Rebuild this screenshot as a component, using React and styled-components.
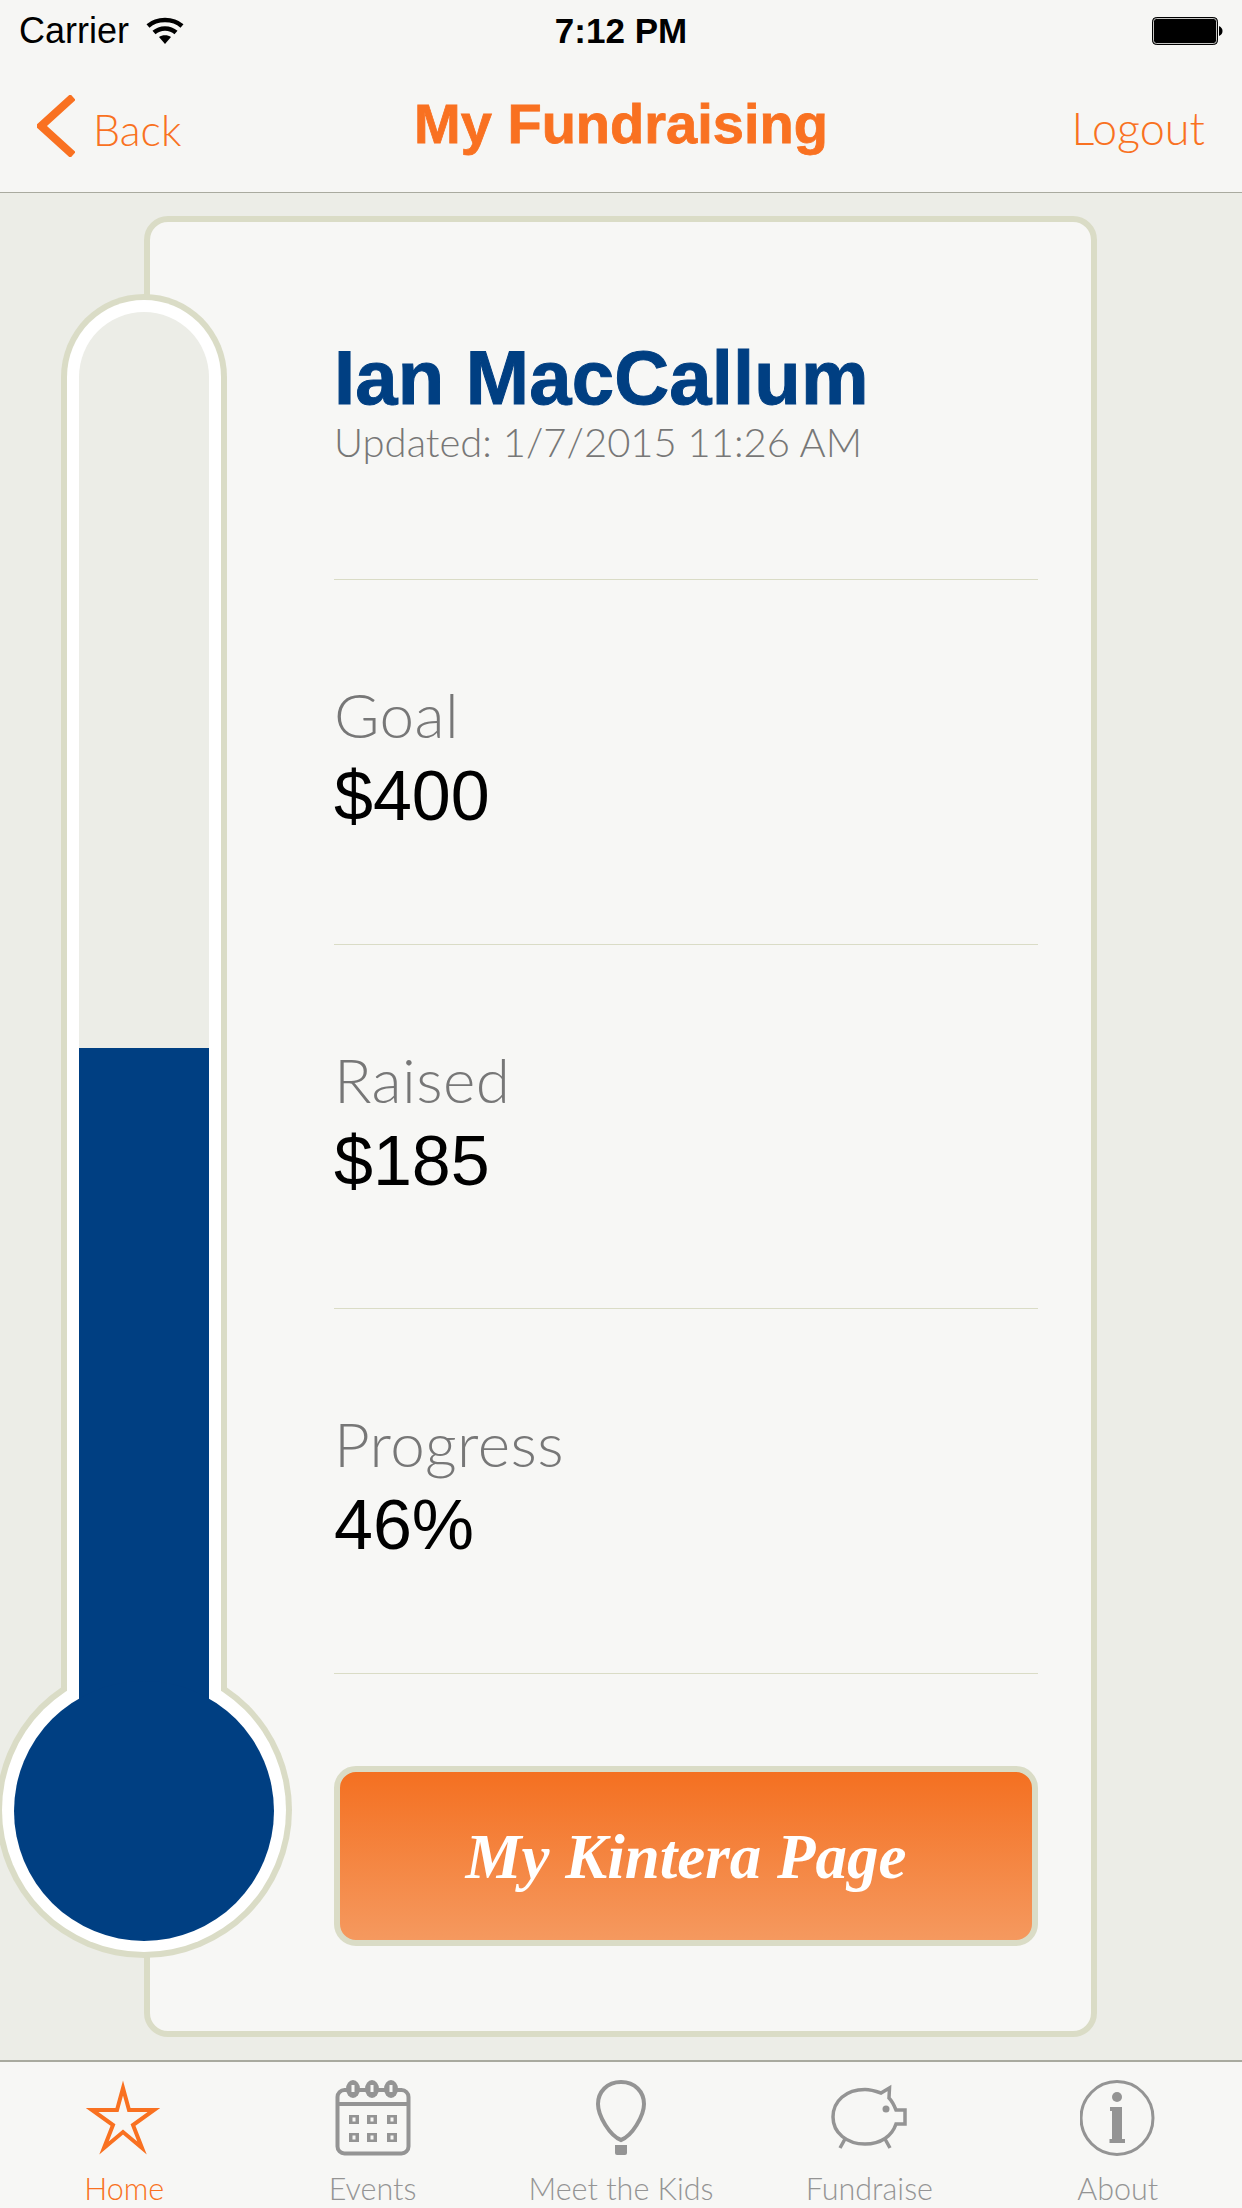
import React from "react"
import styled, { createGlobalStyle } from "styled-components"

const ORANGE = "#f97121"
const BLUE = "#003f82"
const LINE = "#dadcc6"
const TAB_GRAY = "#949494"
const HUMANIST = '"Lato", "Open Sans", sans-serif'
const GROTESK = '"Liberation Sans", Arial, sans-serif'

const GlobalStyle = createGlobalStyle`
  html, body {
    margin: 0;
    padding: 0;
    background: #ecede7;
  }
`

const Page = styled.div`
  width: 1242px;
  height: 2208px;
  display: flex;
  flex-direction: column;
  overflow: hidden;
`

const TopBar = styled.header`
  height: 192px;
  flex: none;
  background: #f6f6f4;
  border-bottom: 1px solid #a9aa9f;
  display: flex;
  flex-direction: column;
`

const StatusBar = styled.div`
  height: 62px;
  padding: 0 19px;
  display: grid;
  grid-template-columns: 1fr auto 1fr;
  align-items: center;
  font-family: ${GROTESK};
  color: #000;
`

const Carrier = styled.div`
  display: flex;
  align-items: center;
  gap: 17px;
  font-size: 36px;
`

const Clock = styled.div`
  font-size: 35px;
  font-weight: 700;
`

const BatteryWrap = styled.div`
  justify-self: end;
  display: flex;
`

const NavBar = styled.nav`
  flex: 1;
  display: grid;
  grid-template-columns: 1fr auto 1fr;
  align-items: start;
  padding: 33px 37px 0 37px;
  color: ${ORANGE};
`

const BackLink = styled.div`
  display: flex;
  align-items: center;
  gap: 18px;
  font-family: ${HUMANIST};
  font-size: 43px;
  font-weight: 300;
`

const BackText = styled.span`
  padding-top: 6px;
`

const NavTitle = styled.h1`
  margin: -2px 0 0;
  font-family: ${GROTESK};
  font-size: 56px;
  font-weight: 700;
  line-height: 62px;
  -webkit-text-stroke: 0.8px ${ORANGE};
`

const Logout = styled.div`
  justify-self: end;
  font-family: ${HUMANIST};
  font-size: 45px;
  font-weight: 300;
  line-height: 62px;
  margin-top: 2px;
`

const Main = styled.main`
  position: relative;
  flex: 1;
  min-height: 0;
  padding: 23px 145px 23px 144px;
  background: #ecede7;
`

const Card = styled.section`
  box-sizing: border-box;
  height: 100%;
  background: #f7f7f5;
  border: 6px solid ${LINE};
  border-radius: 24px;
  padding: 0 53px 0 184px;
  display: flex;
  flex-direction: column;
`

const Person = styled.div`
  height: 358px;
  flex: none;
  padding-top: 115px;
  box-sizing: border-box;
  border-bottom: 1px solid ${LINE};
`

const Name = styled.h2`
  margin: 0;
  font-family: ${GROTESK};
  font-size: 76px;
  font-weight: 700;
  letter-spacing: 0.2px;
  line-height: 82px;
  color: ${BLUE};
  -webkit-text-stroke: 1px ${BLUE};
`

const Updated = styled.div`
  font-family: ${HUMANIST};
  font-size: 40px;
  font-weight: 300;
  line-height: 47px;
  color: #777;
`

const Stat = styled.div`
  height: 364.5px;
  flex: none;
  box-sizing: border-box;
  padding-top: 104px;
  border-bottom: 1px solid ${LINE};
`

const StatLabel = styled.div`
  font-family: ${HUMANIST};
  font-size: 62px;
  font-weight: 300;
  letter-spacing: 0.4px;
  line-height: 60px;
  color: #777;
`

const StatValue = styled.div`
  margin-top: 8px;
  font-family: ${GROTESK};
  font-size: 70px;
  line-height: 88px;
  color: #000;
`

const KinteraButton = styled.button`
  margin-top: 92px;
  height: 180px;
  flex: none;
  box-sizing: border-box;
  border: 6px solid ${LINE};
  border-radius: 22px;
  background: linear-gradient(#f47021, #f5995f);
  color: #fff;
  font-family: "Liberation Serif", serif;
  font-style: italic;
  font-weight: 700;
  font-size: 63px;
  padding: 4px 0 0;
`

const Thermometer = styled.svg`
  position: absolute;
  left: -4px;
  top: 101px;
`

const TabBar = styled.footer`
  height: 148px;
  flex: none;
  box-sizing: border-box;
  background: #f7f7f5;
  border-top: 2px solid #a9aa9f;
  display: grid;
  grid-template-columns: repeat(5, 1fr);
`

const Tab = styled.div`
  display: flex;
  flex-direction: column;
  align-items: center;
  padding-top: 18px;
  color: ${({ $active }) => ($active ? ORANGE : TAB_GRAY)};
  font-family: ${HUMANIST};
  font-weight: 300;
  font-size: 30.5px;
`

const TabIcon = styled.svg`
  display: block;
  height: 76px;
  flex: none;
`

const TabLabel = styled.span`
  line-height: 36px;
  margin-top: 14px;
`

const WifiIcon = () => (
  <svg width="38" height="28" viewBox="0 0 38 28">
    <path d="M2 9 C11 1 27 1 36 9" fill="none" stroke="#000" strokeWidth="4.5" />
    <path d="M8 15.5 C14 10 24 10 30 15.5" fill="none" stroke="#000" strokeWidth="4.5" />
    <path d="M13 20 C16 17.500 22 17.500 25 20 L19 27 Z" fill="#000" />
  </svg>
)

const BatteryIcon = () => (
  <svg width="71" height="28" viewBox="0 0 71 28">
    <rect x="0.5" y="0.5" width="65" height="27" rx="4" fill="#000" stroke="#000" />
    <rect x="1.500" y="1.500" width="63" height="25" rx="3" fill="#000" stroke="#f6f6f4" strokeWidth="0.8" />
    <path d="M67 9 C69.500 10 70.500 12 70.500 14 C70.500 16 69.500 18 67 19 Z" fill="#000" />
  </svg>
)

const Chevron = () => (
  <svg width="38" height="62" viewBox="0 0 38 62">
    <path d="M36 2 L4 31 L36 60" fill="none" stroke={ORANGE} strokeWidth="8" />
  </svg>
)

const StarIcon = () => (
  <TabIcon viewBox="1 0 80 76" width="80">
    <path
      d="M40 8 L46 30 L71 30 L50 45 L59 68 L40 52 L21 68 L30 45 L9 30 L34 30 Z"
      fill="none"
      stroke={ORANGE}
      strokeWidth="4"
      strokeMiterlimit="10"
    />
  </TabIcon>
)

const CalendarIcon = () => (
  <TabIcon viewBox="0 0 76 76" width="76" fill={TAB_GRAY}>
    <rect x="2.500" y="10" width="71" height="63.500" rx="7" fill="none" stroke={TAB_GRAY} strokeWidth="4" />
    <rect x="2" y="22" width="72" height="4" />
    {[18, 37, 56].map(x => (
      <g key={x}>
        <ellipse cx={x} cy="9" rx="7" ry="9" />
        <rect x={x - 1.5} y="5" width="3" height="7" fill="#f7f7f5" />
      </g>
    ))}
    {[35, 53].map(y =>
      [19, 37, 57].map(x => (
        <g key={x + "-" + y}>
          <rect x={x - 5} y={y} width="10" height="9" />
          <rect x={x - 1.5} y={y + 2.5} width="3" height="4" fill="#f7f7f5" />
        </g>
      ))
    )}
  </TabIcon>
)

const BalloonIcon = () => (
  <TabIcon viewBox="0 0 50 76" width="50">
    <path
      d="M25 2 C11 2 2 12 2 24 C2 36 14 56 25 60 C36 56 48 36 48 24 C48 12 39 2 25 2 Z"
      fill="none"
      stroke={TAB_GRAY}
      strokeWidth="4"
    />
    <path d="M19 65 L31 65 L31 73 Q31 75 29 75 L21 75 Q19 75 19 73 Z" fill={TAB_GRAY} />
  </TabIcon>
)

const PigIcon = () => (
  <TabIcon viewBox="1 0 84 76" width="84">
    <g fill="none" stroke={TAB_GRAY} strokeWidth="3.500">
      <path d="M55 13 C48 10.500 44 9.500 39 9.500 C20 9.500 7 21 7 37 C7 53 21 64 39 64 C55 64 66 56 70 44 L79 44 L79 30 L70 30 C68 25 66 21 63 18 L63.500 8 Z" />
      <path d="M19 59 L14 68 M59 59 L64 68" />
    </g>
    <circle cx="60" cy="29" r="3.500" fill={TAB_GRAY} />
  </TabIcon>
)

const InfoIcon = () => (
  <TabIcon viewBox="1 0 76 76" width="76" fill={TAB_GRAY}>
    <ellipse cx="38" cy="38" rx="36" ry="36.500" fill="none" stroke={TAB_GRAY} strokeWidth="3" />
    <circle cx="38" cy="17" r="5" />
    <path d="M31 27 L43 27 L43 59 L46 59 L46 63 L30.500 63 L30.500 59 L33 59 L33 31 L31 31 Z" />
  </TabIcon>
)

const tabs = [
  { label: "Home", Icon: StarIcon, active: true },
  { label: "Events", Icon: CalendarIcon },
  { label: "Meet the Kids", Icon: BalloonIcon },
  { label: "Fundraise", Icon: PigIcon },
  { label: "About", Icon: InfoIcon },
]

const stats = [
  { label: "Goal", value: "$400" },
  { label: "Raised", value: "$185" },
  { label: "Progress", value: "46%" },
]

// coordinates are page pixels, the viewBox just starts at the top of the tube
const ThermometerGraphic = () => (
  <Thermometer width="300" height="1664" viewBox="-4 294 300 1664">
    <rect x="61" y="294" width="166" height="1600" rx="83" fill={LINE} />
    <circle cx="144" cy="1810" r="148" fill={LINE} />
    <rect x="67" y="300" width="154" height="1600" rx="77" fill="#fff" />
    <circle cx="144" cy="1810" r="142" fill="#fff" />
    <path d="M79 1048 L79 377 A65 65 0 0 1 209 377 L209 1048 Z" fill="#ecede7" />
    <rect x="79" y="1048" width="130" height="762" fill={BLUE} />
    <circle cx="144" cy="1811" r="130" fill={BLUE} />
  </Thermometer>
)

export default function App() {
  return (
    <Page>
      <GlobalStyle />
      <TopBar>
        <StatusBar>
          <Carrier>
            Carrier
            <WifiIcon />
          </Carrier>
          <Clock>7:12 PM</Clock>
          <BatteryWrap>
            <BatteryIcon />
          </BatteryWrap>
        </StatusBar>
        <NavBar>
          <BackLink>
            <Chevron />
            <BackText>Back</BackText>
          </BackLink>
          <NavTitle>My Fundraising</NavTitle>
          <Logout>Logout</Logout>
        </NavBar>
      </TopBar>
      <Main>
        <Card>
          <Person>
            <Name>Ian MacCallum</Name>
            <Updated>Updated: 1/7/2015 11:26 AM</Updated>
          </Person>
          {stats.map(stat => (
            <Stat key={stat.label}>
              <StatLabel>{stat.label}</StatLabel>
              <StatValue>{stat.value}</StatValue>
            </Stat>
          ))}
          <KinteraButton>My Kintera Page</KinteraButton>
        </Card>
        <ThermometerGraphic />
      </Main>
      <TabBar>
        {tabs.map(({ label, Icon, active }) => (
          <Tab key={label} $active={active}>
            <Icon />
            <TabLabel>{label}</TabLabel>
          </Tab>
        ))}
      </TabBar>
    </Page>
  )
}
